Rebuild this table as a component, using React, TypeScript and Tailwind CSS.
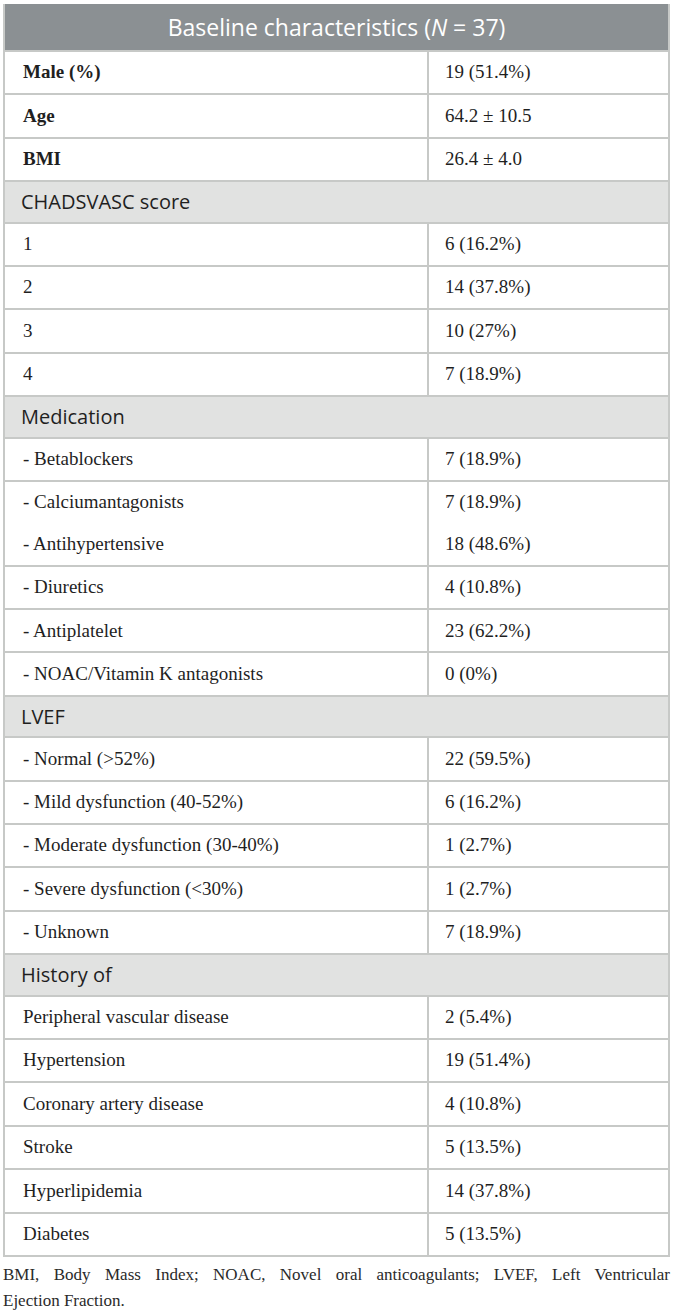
const serif = { fontFamily: '"Liberation Serif", "Times New Roman", serif' };

type Row = { label: string; value: string; bold?: boolean };
type Block = { section?: string; rows: Row[][] };

const blocks: Block[] = [
  {
    rows: [
      [{ label: "Male (%)", value: "19 (51.4%)", bold: true }],
      [{ label: "Age", value: "64.2 ± 10.5", bold: true }],
      [{ label: "BMI", value: "26.4 ± 4.0", bold: true }],
    ],
  },
  {
    section: "CHADSVASC score",
    rows: [
      [{ label: "1", value: "6 (16.2%)" }],
      [{ label: "2", value: "14 (37.8%)" }],
      [{ label: "3", value: "10 (27%)" }],
      [{ label: "4", value: "7 (18.9%)" }],
    ],
  },
  {
    section: "Medication",
    rows: [
      [{ label: "- Betablockers", value: "7 (18.9%)" }],
      [
        { label: "- Calciumantagonists", value: "7 (18.9%)" },
        { label: "- Antihypertensive", value: "18 (48.6%)" },
      ],
      [{ label: "- Diuretics", value: "4 (10.8%)" }],
      [{ label: "- Antiplatelet", value: "23 (62.2%)" }],
      [{ label: "- NOAC/Vitamin K antagonists", value: "0 (0%)" }],
    ],
  },
  {
    section: "LVEF",
    rows: [
      [{ label: "- Normal (>52%)", value: "22 (59.5%)" }],
      [{ label: "- Mild dysfunction (40-52%)", value: "6 (16.2%)" }],
      [{ label: "- Moderate dysfunction (30-40%)", value: "1 (2.7%)" }],
      [{ label: "- Severe dysfunction (<30%)", value: "1 (2.7%)" }],
      [{ label: "- Unknown", value: "7 (18.9%)" }],
    ],
  },
  {
    section: "History of",
    rows: [
      [{ label: "Peripheral vascular disease", value: "2 (5.4%)" }],
      [{ label: "Hypertension", value: "19 (51.4%)" }],
      [{ label: "Coronary artery disease", value: "4 (10.8%)" }],
      [{ label: "Stroke", value: "5 (13.5%)" }],
      [{ label: "Hyperlipidemia", value: "14 (37.8%)" }],
      [{ label: "Diabetes", value: "5 (13.5%)" }],
    ],
  },
];

function DataRow({ lines }: { lines: Row[] }) {
  return (
    <div className="flex border-b-2 border-[#c7c9c7] text-[19px] text-[#1f1f1f]" style={serif}>
      <div className="w-[424px] border-r-2 border-[#c7c9c7] pl-[18px]">
        {lines.map((r) => (
          <div key={r.label} className={`flex h-[41.4px] items-center ${r.bold ? "font-bold" : ""}`}>
            {r.label}
          </div>
        ))}
      </div>
      <div className="flex-1 pl-[16px]">
        {lines.map((r) => (
          <div key={r.value + r.label} className="flex h-[41.4px] items-center">
            {r.value}
          </div>
        ))}
      </div>
    </div>
  );
}

export default function App() {
  return (
    <div className="w-[673px] bg-white pt-[4px]">
      <div className="mx-[3px] border-x-2 border-[#c7c9c7]">
        <div
          className="flex h-[46px] items-center justify-center bg-[#8b9093] text-[23px] text-white"
          style={{ fontFamily: '"Open Sans", Lato, sans-serif' }}
        >
          Baseline characteristics (<span className="italic">N</span>&nbsp;= 37)
        </div>
        <div className="border-b-2 border-[#c7c9c7]" />
        {blocks.map((b, i) => (
          <div key={i}>
            {b.section && (
              <div
                className="flex h-[41.4px] items-center border-b-2 border-[#c7c9c7] bg-[#e1e2e1] pl-[16px] text-[20px] text-[#1f1f1f]"
                style={{ fontFamily: '"Open Sans", Lato, sans-serif' }}
              >
                {b.section}
              </div>
            )}
            {b.rows.map((r, j) => (
              <DataRow key={j} lines={r} />
            ))}
          </div>
        ))}
      </div>
      <div className="mx-[3px] mt-[5px] text-[17px] leading-[26px] text-[#2a2a2a]" style={serif}>
        <p className="text-justify [text-align-last:justify]">
          BMI, Body Mass Index; NOAC, Novel oral anticoagulants; LVEF, Left Ventricular
        </p>
        <p>Ejection Fraction.</p>
      </div>
    </div>
  );
}
